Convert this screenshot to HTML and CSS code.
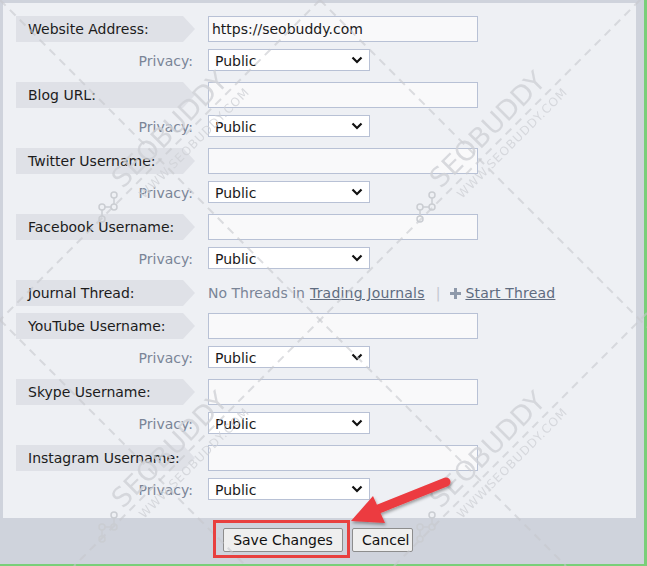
FILE: index.html
```html
<!DOCTYPE html>
<html>
<head>
<meta charset="utf-8">
<link rel="stylesheet" href="styles.css">
</head>
<body>
<div class="frame">
  <div class="panel">
    <div class="row field"><div class="cell"><div class="label">Website Address:</div></div><input class="text" type="text" value="https://seobuddy.com"></div>
    <div class="row priv"><div class="plabel">Privacy:</div><div class="sel"><select><option>Public</option></select><svg class="chev" width="12" height="8" viewBox="0 0 12 8"><path d="M1.5 1.5 L6 6 L10.5 1.5" fill="none" stroke="#111" stroke-width="2.2"/></svg></div></div>

    <div class="row field"><div class="cell"><div class="label">Blog URL:</div></div><input class="text" type="text" value=""></div>
    <div class="row priv"><div class="plabel">Privacy:</div><div class="sel"><select><option>Public</option></select><svg class="chev" width="12" height="8" viewBox="0 0 12 8"><path d="M1.5 1.5 L6 6 L10.5 1.5" fill="none" stroke="#111" stroke-width="2.2"/></svg></div></div>

    <div class="row field"><div class="cell"><div class="label">Twitter Username:</div></div><input class="text" type="text" value=""></div>
    <div class="row priv"><div class="plabel">Privacy:</div><div class="sel"><select><option>Public</option></select><svg class="chev" width="12" height="8" viewBox="0 0 12 8"><path d="M1.5 1.5 L6 6 L10.5 1.5" fill="none" stroke="#111" stroke-width="2.2"/></svg></div></div>

    <div class="row field"><div class="cell"><div class="label">Facebook Username:</div></div><input class="text" type="text" value=""></div>
    <div class="row priv"><div class="plabel">Privacy:</div><div class="sel"><select><option>Public</option></select><svg class="chev" width="12" height="8" viewBox="0 0 12 8"><path d="M1.5 1.5 L6 6 L10.5 1.5" fill="none" stroke="#111" stroke-width="2.2"/></svg></div></div>

    <div class="row field journal"><div class="cell"><div class="label">Journal Thread:</div></div>
      <div class="jinfo">No Threads in <a class="jlink">Trading Journals</a><span class="sep">|</span><svg class="plus" width="11" height="11" viewBox="0 0 11 11"><path d="M4 0h3v4h4v3H7v4H4V7H0V4h4z" fill="#8e99aa"/></svg><a class="jlink">Start Thread</a></div>
    </div>

    <div class="row field"><div class="cell"><div class="label">YouTube Username:</div></div><input class="text" type="text" value=""></div>
    <div class="row priv"><div class="plabel">Privacy:</div><div class="sel"><select><option>Public</option></select><svg class="chev" width="12" height="8" viewBox="0 0 12 8"><path d="M1.5 1.5 L6 6 L10.5 1.5" fill="none" stroke="#111" stroke-width="2.2"/></svg></div></div>

    <div class="row field"><div class="cell"><div class="label">Skype Username:</div></div><input class="text" type="text" value=""></div>
    <div class="row priv"><div class="plabel">Privacy:</div><div class="sel"><select><option>Public</option></select><svg class="chev" width="12" height="8" viewBox="0 0 12 8"><path d="M1.5 1.5 L6 6 L10.5 1.5" fill="none" stroke="#111" stroke-width="2.2"/></svg></div></div>

    <div class="row field"><div class="cell"><div class="label">Instagram Username:</div></div><input class="text" type="text" value=""></div>
    <div class="row priv last"><div class="plabel">Privacy:</div><div class="sel"><select><option>Public</option></select><svg class="chev" width="12" height="8" viewBox="0 0 12 8"><path d="M1.5 1.5 L6 6 L10.5 1.5" fill="none" stroke="#111" stroke-width="2.2"/></svg></div></div>
  </div>
  <div class="footer">
    <button class="btn save">Save Changes</button>
    <button class="btn cancel">Cancel</button>
  </div>

  <svg class="watermark" width="647" height="566" viewBox="0 0 647 566">
    <defs>
      <g id="wm">
        <g transform="translate(176,136) rotate(-45)">
          <text x="0" y="0" text-anchor="middle" class="wmt1">SEOBUDDY</text>
          <text x="8" y="22" text-anchor="middle" class="wmt2">WWW.SEOBUDDY.COM</text>
        </g>
        <g transform="translate(102,207)" class="node">
          <circle cx="0" cy="12" r="3"/><circle cx="0" cy="0" r="3"/><circle cx="12" cy="0" r="3"/><circle cx="12" cy="-12" r="3"/>
          <path d="M0 9V3M3 0h6M12 -3v-6"/>
        </g>
      </g>
    </defs>
    <g class="dash">
      <path d="M0 0 L566 566"/>
      <path d="M320 0 L647 327"/>
      <path d="M0 320 L246 566"/>
      <path d="M320 0 L0 320"/>
      <path d="M640 0 L74 566"/>
      <path d="M647 313 L394 566"/>
    </g>
    <use href="#wm"/>
    <use href="#wm" x="318" y="0"/>
    <use href="#wm" x="0" y="320"/>
    <use href="#wm" x="318" y="320"/>
  </svg>

  <div class="redbox"></div>
  <svg class="arrow" width="647" height="566" viewBox="0 0 647 566">
    <defs>
      <filter id="sh" x="-20%" y="-20%" width="140%" height="140%">
        <feDropShadow dx="1" dy="2" stdDeviation="1.5" flood-color="#000" flood-opacity="0.35"/>
      </filter>
    </defs>
    <g filter="url(#sh)">
      <path d="M446 482 L376 510" stroke="#ec3a3f" stroke-width="9" stroke-linecap="round" fill="none"/>
      <path d="M351 521 L373 496 L385 523 Z" fill="#ec3a3f"/>
    </g>
  </svg>
</div>
</body>
</html>
```

FILE: styles.css
```css
* { box-sizing: border-box; }
html, body { margin: 0; padding: 0; }
body {
  width: 647px;
  height: 566px;
  overflow: hidden;
  font-family: "DejaVu Sans", Verdana, sans-serif;
  font-size: 14px;
  background: #cfd3dc;
}
.frame {
  position: relative;
  width: 647px;
  height: 566px;
  background: #cfd3dc;
  border-right: 3px solid #79cf79;
  border-bottom: 2px solid #79cf79;
  padding-top: 3px;
}
.panel {
  margin-left: 3px;
  width: 633px;
  height: 515px;
  background: #eef0f4;
  padding: 13px 0 0 13px;
}
.row {
  display: flex;
  align-items: center;
}
.field {
  height: 26px;
  margin-bottom: 7px;
}
.priv {
  height: 22px;
  margin-bottom: 11px;
}
.cell {
  width: 192px;
  flex: none;
}
.label {
  width: 179px;
  height: 26px;
  line-height: 26px;
  padding-left: 12px;
  color: #1c1c1c;
  background: #dfe1e7;
  clip-path: polygon(0 0, 167px 0, 179px 13px, 167px 26px, 0 26px);
  white-space: nowrap;
}
.text {
  width: 270px;
  height: 26px;
  border: 1px solid #b8c1d5;
  background: #f9f9fa;
  padding: 0 3px;
  margin: 0;
  font-family: "DejaVu Sans", Verdana, sans-serif;
  font-size: 14px;
  color: #1a1a1a;
  outline: none;
}
.plabel {
  width: 192px;
  flex: none;
  text-align: right;
  padding-right: 15px;
  padding-top: 2px;
  color: #7a8597;
}
.sel {
  position: relative;
  width: 162px;
  height: 22px;
}
.sel select {
  appearance: none;
  -webkit-appearance: none;
  width: 162px;
  height: 22px;
  margin: 0;
  border: 1px solid #b8c1d5;
  background: #ffffff;
  border-radius: 0;
  padding: 1px 0 0 6px;
  font-family: "DejaVu Sans", Verdana, sans-serif;
  font-size: 14px;
  color: #1a1a1a;
  outline: none;
}
.chev {
  position: absolute;
  left: 143px;
  top: 7px;
  pointer-events: none;
}
.jinfo {
  color: #7a8597;
  white-space: nowrap;
  display: flex;
  align-items: center;
}
.jlink {
  color: #5f6c80;
  text-decoration: underline;
  margin-left: 5px;
  letter-spacing: 0.2px;
}
.sep {
  color: #c3c7cf;
  margin: 0 10px 0 11px;
}
.plus {
  margin-right: -1px;
}
.footer {
  width: 636px;
  height: 46px;
  display: flex;
  justify-content: center;
  align-items: flex-start;
  gap: 9px;
  padding-top: 10px;
  padding-right: 0;
}
.btn {
  height: 24px;
  margin: 0;
  padding: 0 9px;
  font-family: "DejaVu Sans", Verdana, sans-serif;
  font-size: 14px;
  color: #111;
  background: #efefef;
  border: 1px solid #8d8d8d;
  border-radius: 2px;
}
.save { width: 120px; }
.cancel { width: 61px; }
.watermark {
  position: absolute;
  left: 0;
  top: 0;
  pointer-events: none;
}
.dash path {
  stroke: #c6c8cd;
  stroke-width: 2;
  stroke-dasharray: 8 6;
  fill: none;
  opacity: 0.6;
}
.wmt1 {
  font-family: "DejaVu Sans", sans-serif;
  font-size: 27px;
  fill: #d0d2d7;
  opacity: 0.8;
}
.wmt2 {
  font-family: "DejaVu Sans", sans-serif;
  font-size: 12px;
  letter-spacing: 1px;
  fill: #d0d2d7;
  opacity: 0.8;
}
.node circle {
  fill: none;
  stroke: #cacdd2;
  stroke-width: 1.5;
}
.node path {
  stroke: #cacdd2;
  stroke-width: 1.5;
  fill: none;
}
.redbox {
  position: absolute;
  left: 213px;
  top: 520px;
  width: 137px;
  height: 38px;
  border: 3px solid #e8403f;
  pointer-events: none;
}
.arrow {
  position: absolute;
  left: 0;
  top: 0;
  pointer-events: none;
}
```
